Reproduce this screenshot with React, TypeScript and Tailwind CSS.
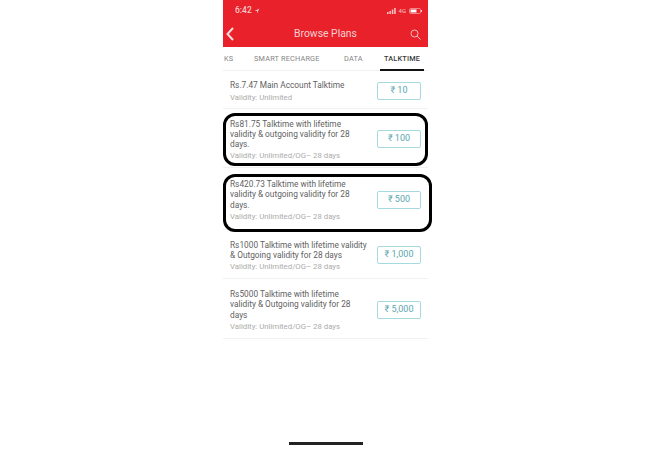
import React from "react";

const plans = [
  { h: "h-[38px]", lines: ["Rs.7.47 Main Account Talktime"], v: "Validity: Unlimited", p: "₹ 10" },
  { h: "h-[59px]", lines: ["Rs81.75 Talktime with lifetime", "validity & outgoing validity for 28", "days."], v: "Validity: Unlimited/OG– 28 days", p: "₹ 100" },
  { h: "h-[62px]", lines: ["Rs420.73 Talktime with lifetime", "validity & outgoing validity for 28", "days."], v: "Validity: Unlimited/OG– 28 days", p: "₹ 500" },
  { h: "h-[49px]", lines: ["Rs1000 Talktime with lifetime validity", "& Outgoing validity for 28 days"], v: "Validity: Unlimited/OG– 28 days", p: "₹ 1,000" },
  { h: "h-[60px]", lines: ["Rs5000 Talktime with lifetime", "validity & Outgoing validity for 28", "days"], v: "Validity: Unlimited/OG– 28 days", p: "₹ 5,000" },
];

export default function App() {
  return (
    <div className="relative w-[645px] h-[450px] overflow-hidden bg-white font-['Roboto','Liberation_Sans',sans-serif]">
      <div className="ml-[223px] w-[205px] flex flex-col">
        <div className="h-[47px] bg-[#e8212b] text-white flex flex-col">
          <div className="h-[21px] flex items-center justify-between pl-[12px] pr-[6px] text-[8.5px] text-[#f6c9c9]">
            <div className="flex items-center gap-[2px]">
              <span className="font-medium">6:42</span>
              <svg width="6" height="6" viewBox="0 0 10 10"><path d="M9 1 1 5h4v4z" fill="currentColor" /></svg>
            </div>
            <div className="flex items-center gap-[3px]">
              <svg width="9" height="6" viewBox="0 0 9 6" fill="currentColor">
                <rect x="0" y="4" width="1.5" height="2" /><rect x="2.4" y="3" width="1.5" height="3" /><rect x="4.8" y="1.5" width="1.5" height="4.5" /><rect x="7.2" y="0" width="1.5" height="6" />
              </svg>
              <span className="text-[6px]">4G</span>
              <svg width="13" height="6" viewBox="0 0 13 6">
                <rect x="0.5" y="0.5" width="11" height="5" rx="1.2" fill="none" stroke="currentColor" strokeWidth="0.6" />
                <rect x="1.5" y="1.5" width="6" height="3" fill="#fff" />
                <rect x="12" y="2" width="1" height="2" fill="currentColor" />
              </svg>
            </div>
          </div>
          <div className="flex-1 flex items-center justify-between pl-[3px] pr-[7px]">
            <svg width="8" height="14" viewBox="0 0 8 14" fill="none" stroke="#f8dcdc" strokeWidth="2"><path d="M7 1 1.5 7 7 13" /></svg>
            <span className="text-[10.4px] text-[#f8d0d0] ml-[7px]">Browse Plans</span>
            <svg width="11" height="11" viewBox="0 0 11 11" fill="none" stroke="#f6bcbc" strokeWidth="1"><circle cx="4.5" cy="4.5" r="3.5" /><path d="m7 7 3.5 3.5" /></svg>
          </div>
        </div>

        <div className="h-[24px] border-b border-[#f1f1f1] flex text-[7.3px] tracking-[0.2px] text-[#858585]">
          <span className="w-[31px] pl-[1px] pt-[7px]">KS</span>
          <span className="w-[90px] pt-[7px]">SMART RECHARGE</span>
          <span className="w-[36px] pt-[7px]">DATA</span>
          <span className="w-[44px] h-[24px] flex flex-col items-center pt-[7px] text-[#3a3a3a] font-medium border-b-2 border-[#111]">TALKTIME</span>
        </div>

        {plans.map((p, i) => (
          <div key={i} className={`${p.h} flex items-center justify-between pt-[2px] pl-[7px] pr-[7px] border-b border-[#f1f1f1]`}>
            <div className="flex flex-col pt-[2px]">
              {p.lines.map((l) => (
                <span key={l} className="text-[8.3px] leading-[10.3px] text-[#5f5f5f] whitespace-nowrap">{l}</span>
              ))}
              <span className="text-[7.8px] leading-[10px] mt-[2px] text-[#ababab] whitespace-nowrap">{p.v}</span>
            </div>
            <div className="w-[44px] h-[18px] shrink-0 border border-[#a5dbe0] rounded-[2px] flex items-center justify-center text-[9px] text-[#5aa7b0]">{p.p}</div>
          </div>
        ))}

        <div className="w-[74px] h-[3px] bg-[#222] mt-[103px] ml-[66px]" />
      </div>

      <div className="absolute left-[223px] top-[113px] w-[205px] h-[53px] border-[3px] border-black rounded-[12px]" />
      <div className="absolute left-[223px] top-[174px] w-[209px] h-[58px] border-[3px] border-black rounded-[12px]" />
    </div>
  );
}
